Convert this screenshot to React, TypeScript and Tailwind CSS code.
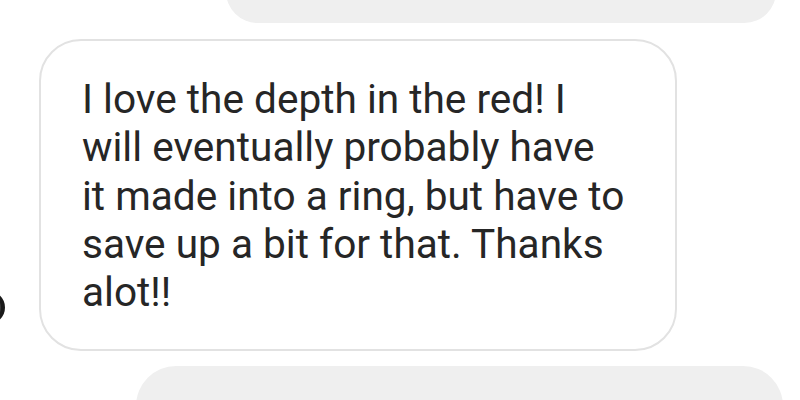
export default function App() {
  return (
    <div className="relative h-[400px] w-[800px] overflow-hidden bg-white font-['Roboto',sans-serif]">
      {/* previous message */}
      <div className="ml-[226px] mt-[-40px] h-[63px] w-[550px] rounded-[40px] bg-[#efefef]" />

      <div className="relative ml-[39px] mt-[16px] w-[638px] rounded-[42px] border-2 border-[#e2e2e2] pb-[33px] pl-[41px] pt-[34px]">
        <p className="text-[40.6px] leading-[48.3px] text-[#262626]">
          I love the depth in the red! I<br />
          will eventually probably have<br />
          it made into a ring, but have to<br />
          save up a bit for that. Thanks<br />
          alot!!
        </p>
      </div>

      {/* avatar peeking in from the edge */}
      <div className="absolute left-[-28px] top-[291px] h-[33px] w-[33px] rounded-full border-[4px] border-[#1a1a1a] bg-[#3a3a3a]" />

      {/* next message */}
      <div className="ml-[136px] mt-[15px] h-[80px] w-[647px] rounded-[46px] bg-[#efefef]" />
    </div>
  );
}
